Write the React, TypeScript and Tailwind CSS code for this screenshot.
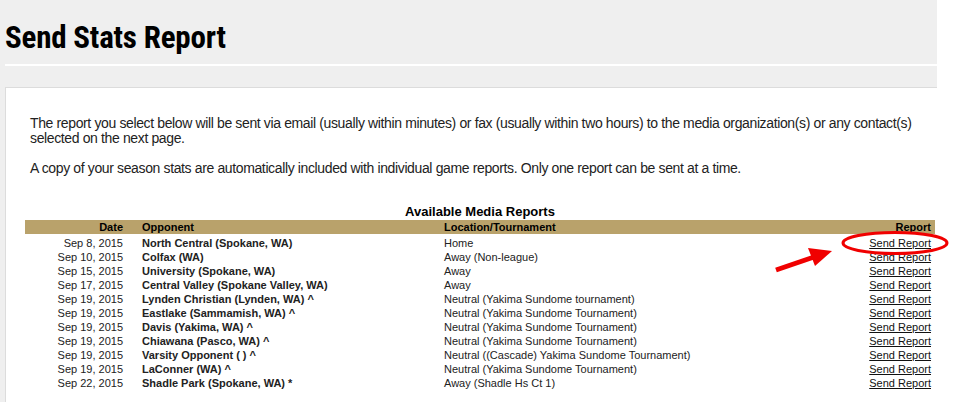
const rows = [
  ["Sep 8, 2015", "North Central (Spokane, WA)", "Home"],
  ["Sep 10, 2015", "Colfax (WA)", "Away (Non-league)"],
  ["Sep 15, 2015", "University (Spokane, WA)", "Away"],
  ["Sep 17, 2015", "Central Valley (Spokane Valley, WA)", "Away"],
  ["Sep 19, 2015", "Lynden Christian (Lynden, WA) ^", "Neutral (Yakima Sundome tournament)"],
  ["Sep 19, 2015", "Eastlake (Sammamish, WA) ^", "Neutral (Yakima Sundome Tournament)"],
  ["Sep 19, 2015", "Davis (Yakima, WA) ^", "Neutral (Yakima Sundome Tournament)"],
  ["Sep 19, 2015", "Chiawana (Pasco, WA) ^", "Neutral (Yakima Sundome Tournament)"],
  ["Sep 19, 2015", "Varsity Opponent ( ) ^", "Neutral ((Cascade) Yakima Sundome Tournament)"],
  ["Sep 19, 2015", "LaConner (WA) ^", "Neutral (Yakima Sundome Tournament)"],
  ["Sep 22, 2015", "Shadle Park (Spokane, WA) *", "Away (Shadle Hs Ct 1)"],
];

export default function App() {
  return (
    <div className="relative h-[402px] w-[954px] overflow-hidden bg-white font-['Liberation_Sans',Arial,sans-serif] text-[#222]">
      <div className="w-[937px] bg-[#efefef] pt-px">
        {/* Page title */}
        <div className="h-[63px] pl-[5px] pt-[19px]">
          <h1 className="font-['Liberation_Sans_Narrow','Roboto_Condensed','DejaVu_Sans_Condensed','DejaVu_Sans',sans-serif] font-stretch-condensed text-[31px] leading-[36px] font-bold tracking-[-0.2px] text-black">
            Send Stats Report
          </h1>
        </div>
        <div className="ml-[5px] h-[2px] bg-white" />
        <div className="ml-[5px] h-[22px] border-b border-[#dcdcdc]" />

        {/* Content panel */}
        <div className="ml-[5px] h-[320px] border-l border-[#dcdcdc] bg-white pt-[28px]">
          <div className="px-[24px] text-[14px] leading-[15px] tracking-[-0.37px] text-[#222]">
            <p className="mb-[15px] w-[900px]">
              The report you select below will be sent via email (usually within minutes) or fax (usually within two hours) to the media organization(s) or any contact(s) selected on the next page.
            </p>
            <p>
              A copy of your season stats are automatically included with individual game reports. Only one report can be sent at a time.
            </p>
          </div>

          <div className="ml-[19px] mt-[28px] w-[910px] text-[11px] leading-[14px]">
            <div className="text-center text-[13px] leading-[16px] font-bold text-black">Available Media Reports</div>
            <div className="grid h-[14px] grid-cols-[113px_306px_1fr_120px] bg-[#b9a26b] font-bold text-black">
              <div className="pr-[15px] text-right">Date</div>
              <div className="pl-[4px]">Opponent</div>
              <div>Location/Tournament</div>
              <div className="pr-[4px] text-right">Report</div>
            </div>
            <div className="pt-[2px]">
              {rows.map(([date, opp, loc], i) => (
                <div key={i} className="grid h-[14px] grid-cols-[113px_306px_1fr_120px]">
                  <div className="pr-[15px] text-right">{date}</div>
                  <div className="pl-[4px] font-bold">{opp}</div>
                  <div className="whitespace-nowrap">{loc}</div>
                  <div className="pr-[4px] text-right">
                    <a href="#" className="text-[#111] underline">Send Report</a>
                  </div>
                </div>
              ))}
            </div>
          </div>
        </div>
      </div>

      {/* Annotation overlay */}
      <svg className="pointer-events-none absolute left-0 top-0" width="954" height="402">
        <ellipse cx="895" cy="243" rx="52" ry="10.5" fill="none" stroke="#f00000" strokeWidth="3" />
        <line x1="776" y1="270" x2="814" y2="257" stroke="#f00000" strokeWidth="5" />
        <polygon points="832,251 808,248 815,266" fill="#f00000" />
      </svg>
    </div>
  );
}
